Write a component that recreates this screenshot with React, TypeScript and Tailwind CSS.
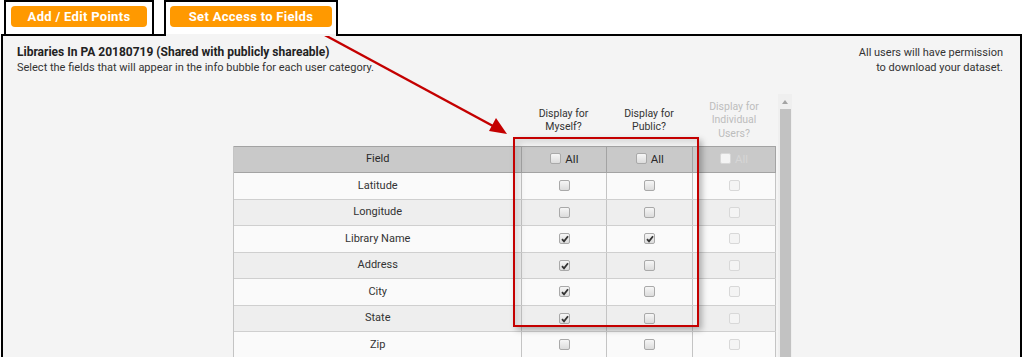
import React from "react";

const FIELDS = [
  { name: "Latitude", mine: false, pub: false },
  { name: "Longitude", mine: false, pub: false },
  { name: "Library Name", mine: true, pub: true },
  { name: "Address", mine: true, pub: false },
  { name: "City", mine: true, pub: false },
  { name: "State", mine: true, pub: false },
  { name: "Zip", mine: false, pub: false },
];

function CheckBox({ checked = false, disabled = false }: { checked?: boolean; disabled?: boolean }) {
  return (
    <span
      className={`relative inline-block w-[11px] h-[11px] rounded-[2px] border ${
        disabled
          ? "border-[#d8d8d8] bg-[#f4f4f4]"
          : "border-[#a9a9a9] bg-gradient-to-b from-[#f6f6f6] to-[#dcdcdc]"
      }`}
    >
      {checked && (
        <svg className="absolute left-[1px] top-[1px] w-[8px] h-[8px]" viewBox="0 0 8 8">
          <path d="M1 4.2 L3 6.4 L7 1.2" fill="none" stroke="#333" strokeWidth={1.8} />
        </svg>
      )}
    </span>
  );
}

function HeaderAll({ disabled = false }: { disabled?: boolean }) {
  return (
    <div className="flex items-center justify-center gap-[4px]">
      <span className="-mt-[3px] flex">
        <CheckBox disabled={disabled} />
      </span>
      <span className={`text-[11.5px] ${disabled ? "text-[#d6d6d6]" : "text-[#2a2a2a]"}`}>All</span>
    </div>
  );
}

export default function App() {
  return (
    <div className="relative w-[1024px] h-[357px] overflow-hidden bg-white font-['Roboto','Liberation_Sans',sans-serif] text-[11px] text-[#333]">
      {/* Tabs */}
      <div className="flex h-[34px] items-end">
        <div className="ml-[4px] w-[150px] h-[34px] border-2 border-b-0 border-black px-[5px] pt-[4px]">
          <div className="h-[21px] rounded-[4px] bg-[#ff9900] text-white font-bold text-[13px] tracking-[0.3px] flex items-center justify-center">
            Add / Edit Points
          </div>
        </div>
        <div className="relative z-10 ml-[10px] w-[174px] h-[36px] -mb-[2px] border-2 border-b-0 border-black bg-white px-[4px] pt-[4px]">
          <div className="h-[21px] rounded-[4px] bg-[#ff9900] text-white font-bold text-[13px] tracking-[0.3px] flex items-center justify-center">
            Set Access to Fields
          </div>
          <div className="absolute left-0 right-0 bottom-0 h-[2px] bg-[#f4f4f4]" />
        </div>
      </div>

      {/* Panel */}
      <div className="ml-[1px] w-[1021px] h-[323px] border-2 border-b-0 border-black bg-[#f4f4f4]">
        <div className="flex justify-between pl-[14px] pr-[17px] pt-[9px]">
          <div className="leading-[15px]">
            <div className="font-bold text-[12px] text-[#222]">
              Libraries In PA 20180719 (Shared with publicly shareable)
            </div>
            <div>Select the fields that will appear in the info bubble for each user category.</div>
          </div>
          <div className="text-right leading-[14.5px] pt-[1px]">
            <div>All users will have permission</div>
            <div>to download your dataset.</div>
          </div>
        </div>

        <div className="mt-[19px] ml-[230px] flex">
          <div className="w-[543px]">
            {/* Column labels */}
            <div className="flex h-[52px] items-center text-[10.5px] leading-[13.5px] text-center">
              <div className="w-[288px]" />
              <div className="w-[85px]">
                Display for
                <br />
                Myself?
              </div>
              <div className="w-[86px]">
                Display for
                <br />
                Public?
              </div>
              <div className="w-[84px] text-[#bdbdbd]">
                Display for
                <br />
                Individual
                <br />
                Users?
              </div>
            </div>

            {/* Table */}
            <div className="border-l border-[#c4c4c4]">
              <div className="flex h-[27px] border-y border-[#a3a3a3] bg-[#c9c9c9] text-[#2a2a2a]">
                <div className="w-[288px] flex items-center justify-center">Field</div>
                <div className="w-[85px] border-l border-[#a3a3a3] flex items-center justify-center">
                  <HeaderAll />
                </div>
                <div className="w-[86px] border-l border-[#a3a3a3] flex items-center justify-center">
                  <HeaderAll />
                </div>
                <div className="w-[84px] border-l border-[#a3a3a3] border-r flex items-center justify-center">
                  <HeaderAll disabled />
                </div>
              </div>
              {FIELDS.map((f, i) => (
                <div
                  key={f.name}
                  className={`flex h-[26.5px] border-b border-[#cfcfcf] ${
                    i % 2 === 0 ? "bg-[#fafafa]" : "bg-[#eeeeee]"
                  }`}
                >
                  <div className="w-[288px] flex items-center justify-center text-[#333]">{f.name}</div>
                  <div className="w-[85px] border-l border-[#c4c4c4] flex items-center justify-center">
                    <CheckBox checked={f.mine} />
                  </div>
                  <div className="w-[86px] border-l border-[#c4c4c4] flex items-center justify-center">
                    <CheckBox checked={f.pub} />
                  </div>
                  <div className="w-[84px] border-x border-[#c4c4c4] flex items-center justify-center">
                    <CheckBox disabled />
                  </div>
                </div>
              ))}
            </div>
          </div>

          {/* Scrollbar */}
          <div className="ml-[2px] w-[14px] h-[300px] bg-[#efefef] flex flex-col items-center">
            <div className="h-[15px] flex items-center justify-center">
              <div className="w-0 h-0 border-x-[3.5px] border-x-transparent border-b-[4px] border-b-[#a3a3a3]" />
            </div>
            <div className="w-[11px] flex-1 bg-[#c2c2c2]" />
          </div>
        </div>
      </div>

      {/* Red highlight box */}
      <div className="absolute left-[513px] top-[137px] w-[186px] h-[190px] border-2 border-[#c40000] shadow-[3px_3px_6px_rgba(0,0,0,0.28),inset_5px_4px_6px_rgba(0,0,0,0.10)]" />

      {/* Red arrow */}
      <svg className="absolute inset-0 pointer-events-none" width={1024} height={357}>
        <line x1={321} y1={33} x2={493} y2={126} stroke="#c40000" strokeWidth={2.5} />
        <polygon points="507,134 489,131 496,118" fill="#c40000" />
      </svg>
    </div>
  );
}
